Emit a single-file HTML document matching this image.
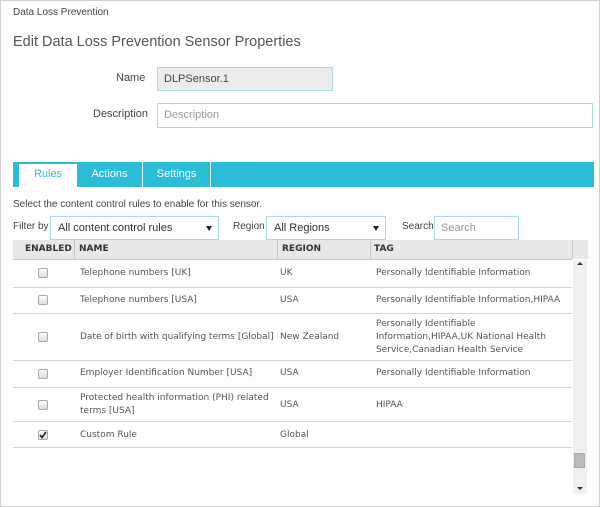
<!DOCTYPE html>
<html><head><style>
*{margin:0;padding:0;box-sizing:border-box}
body{width:600px;height:507px;background:#fff;font-family:"Liberation Sans",Arial,sans-serif;position:relative;overflow:hidden}
.frame{position:absolute;left:0;top:0;width:600px;height:507px;border:1px solid #d0d0d0}
.a{position:absolute;white-space:nowrap}
.inp{position:absolute;border:1px solid #a8dde6;background:#fff;font-size:11px;color:#999;padding-left:6px;line-height:20px}
.sel{position:absolute;border:1px solid #a8dde6;background:#fff;font-size:11px;color:#333;padding-left:7px;line-height:22px}
.sel:after{content:"";position:absolute;right:6px;top:9px;border-left:3px solid transparent;border-right:3px solid transparent;border-top:5px solid #222}
.lbl{position:absolute;font-size:11px;color:#444}
.hl{position:absolute;left:13px;width:559px;height:1px;background:#d4d4d4}
.t{position:absolute;font-family:"DejaVu Sans",Verdana,sans-serif;font-size:9px;color:#555;line-height:13px}
.cb{position:absolute;left:38px;width:10px;height:10px;border:1px solid #a9a9a9;border-radius:2px;background:linear-gradient(#fafafa,#dedede)}
.th{position:absolute;top:244px;font-family:"DejaVu Sans",Verdana,sans-serif;font-weight:bold;font-size:9px;color:#333}
</style></head><body>
<div class="frame"></div>
<div class="a" style="left:13px;top:7px;font-size:10px;color:#444">Data Loss Prevention</div>
<div class="a" style="left:13px;top:34px;font-size:14.5px;color:#555">Edit Data Loss Prevention Sensor Properties</div>
<div class="lbl" style="left:116px;top:72px">Name</div>
<div class="inp" style="left:157px;top:67px;width:176px;height:24px;background:#ececec;color:#444;line-height:22px">DLPSensor.1</div>
<div class="lbl" style="left:93px;top:108px">Description</div>
<div class="inp" style="left:157px;top:103px;width:436px;height:25px;line-height:23px">Description</div>

<div class="a" style="left:13px;top:162px;width:581px;height:25px;background:#2bbcd7"></div>
<div class="a" style="left:19px;top:164px;width:58px;height:23px;background:#fff;color:#2bbcd7;font-size:11px;text-align:center;line-height:21px">Rules</div>
<div class="a" style="left:77px;top:162px;width:66px;height:25px;border-right:1px solid #e6f7fa;color:#fff;font-size:11px;text-align:center;line-height:24px">Actions</div>
<div class="a" style="left:143px;top:162px;width:68px;height:25px;border-right:1px solid #e6f7fa;color:#fff;font-size:11px;text-align:center;line-height:24px">Settings</div>

<div class="a" style="left:13px;top:199px;font-size:10px;color:#444">Select the content control rules to enable for this sensor.</div>
<div class="lbl" style="left:13px;top:221px;font-size:10px">Filter by</div>
<div class="sel" style="left:50px;top:216px;width:169px;height:24px">All content control rules</div>
<div class="lbl" style="left:233px;top:221px;font-size:10px">Region</div>
<div class="sel" style="left:266px;top:216px;width:120px;height:24px">All Regions</div>
<div class="lbl" style="left:402px;top:221px;font-size:10px">Search</div>
<div class="inp" style="left:434px;top:216px;width:85px;height:24px;line-height:22px">Search</div>

<div class="a" style="left:13px;top:240px;width:575px;height:19px;background:#e8e8e8"></div>
<div class="a" style="left:74px;top:240px;width:1px;height:19px;background:#c8c8c8"></div>
<div class="a" style="left:277px;top:240px;width:1px;height:19px;background:#c8c8c8"></div>
<div class="a" style="left:370px;top:240px;width:1px;height:19px;background:#c8c8c8"></div>
<div class="a" style="left:572px;top:240px;width:1px;height:19px;background:#c8c8c8"></div>
<div class="th" style="left:25px">ENABLED</div>
<div class="th" style="left:79px">NAME</div>
<div class="th" style="left:282px">REGION</div>
<div class="th" style="left:374px">TAG</div>
<div class="hl" style="top:259px;background:#c8c8c8"></div>

<div class="a" style="left:573px;top:260px;width:14px;height:234px;background:#f0f0f0"></div>
<div class="a" style="left:577px;top:262px;border-left:3px solid transparent;border-right:3px solid transparent;border-bottom:3px solid #333"></div>
<div class="a" style="left:574px;top:453px;width:11px;height:15px;background:#bcbcbc;border:1px solid #aaa"></div>
<div class="a" style="left:577px;top:487px;border-left:3px solid transparent;border-right:3px solid transparent;border-top:3px solid #333"></div>

<div class="cb" style="top:268px"></div>
<div class="t" style="left:80px;top:267px">Telephone numbers [UK]</div>
<div class="t" style="left:280px;top:267px">UK</div>
<div class="t" style="left:376px;top:267px">Personally Identifiable Information</div>
<div class="hl" style="top:287px"></div>

<div class="cb" style="top:295px"></div>
<div class="t" style="left:80px;top:294px">Telephone numbers [USA]</div>
<div class="t" style="left:280px;top:294px">USA</div>
<div class="t" style="left:376px;top:294px">Personally Identifiable Information,HIPAA</div>
<div class="hl" style="top:313px"></div>

<div class="cb" style="top:332px"></div>
<div class="t" style="left:80px;top:331px">Date of birth with qualifying terms [Global]</div>
<div class="t" style="left:280px;top:331px">New Zealand</div>
<div class="t" style="left:376px;top:318px">Personally Identifiable<br>Information,HIPAA,UK National Health<br>Service,Canadian Health Service</div>
<div class="hl" style="top:360px"></div>

<div class="cb" style="top:369px"></div>
<div class="t" style="left:80px;top:367px">Employer Identification Number [USA]</div>
<div class="t" style="left:280px;top:367px">USA</div>
<div class="t" style="left:376px;top:367px">Personally Identifiable Information</div>
<div class="hl" style="top:387px"></div>

<div class="cb" style="top:400px"></div>
<div class="t" style="left:80px;top:392px">Protected health information (PHI) related<br>terms [USA]</div>
<div class="t" style="left:280px;top:399px">USA</div>
<div class="t" style="left:376px;top:399px">HIPAA</div>
<div class="hl" style="top:421px"></div>

<div class="cb" style="top:430px"></div>
<svg class="a" style="left:39px;top:431px" width="8" height="8" viewBox="0 0 8 8"><path d="M1 4 L3 6.5 L7 1" stroke="#222" stroke-width="1.6" fill="none"/></svg>
<div class="t" style="left:80px;top:429px">Custom Rule</div>
<div class="t" style="left:280px;top:429px">Global</div>
<div class="hl" style="top:447px"></div>
</body></html>
